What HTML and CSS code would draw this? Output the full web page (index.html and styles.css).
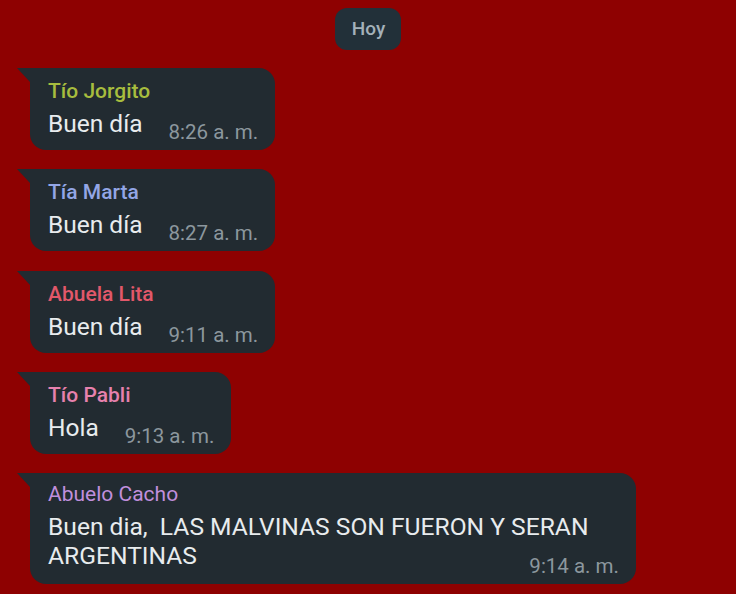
FILE: index.html
```html
<!DOCTYPE html>
<html lang="es">
<head>
<meta charset="utf-8">
<link rel="stylesheet" href="styles.css">
</head>
<body>
<div class="chat">
  <div class="day"><span class="day-pill">Hoy</span></div>
  <div class="bubble">
    <div class="name c-jorgito">Tío Jorgito</div>
    <div class="row"><span class="msg">Buen día</span><span class="time">8:26 a. m.</span></div>
  </div>
  <div class="bubble">
    <div class="name c-marta">Tía Marta</div>
    <div class="row"><span class="msg">Buen día</span><span class="time">8:27 a. m.</span></div>
  </div>
  <div class="bubble">
    <div class="name c-lita">Abuela Lita</div>
    <div class="row"><span class="msg">Buen día</span><span class="time">9:11 a. m.</span></div>
  </div>
  <div class="bubble">
    <div class="name c-pabli">Tío Pabli</div>
    <div class="row"><span class="msg">Hola</span><span class="time">9:13 a. m.</span></div>
  </div>
  <div class="bubble bubble-long">
    <div class="name name-cond c-cacho">Abuelo Cacho</div>
    <div class="msg msg-cond"><span>Buen dia,&nbsp; LAS MALVINAS SON FUERON Y SERAN</span> <span>ARGENTINAS</span><span class="time time-end">9:14 a. m.</span></div>
  </div>
</div>
</body>
</html>
```

FILE: styles.css
```css
html, body {
  margin: 0;
  padding: 0;
  background: #8e0101;
  width: 736px;
  height: 594px;
  overflow: hidden;
  font-family: Roboto, "Noto Sans", sans-serif;
}
.chat {
  display: flex;
  flex-direction: column;
  align-items: flex-start;
  padding: 8px 0 0 30px;
  gap: 19.3px;
}
.day {
  align-self: stretch;
  display: flex;
  justify-content: center;
  margin-left: -30px;
  margin-bottom: -1.3px;
}
.day-pill {
  background: #223039;
  color: #a4b1ba;
  font-weight: 500;
  font-size: 19px;
  line-height: 42px;
  padding: 0 16px 0 17px;
  border-radius: 12px;
}
.bubble {
  position: relative;
  background: #222b31;
  border-radius: 0 16px 16px 16px;
  padding: 10px 17px 0 18px;
  box-sizing: border-box;
  height: 82px;
}
.bubble::before {
  content: "";
  position: absolute;
  left: -13px;
  top: 0;
  width: 0;
  height: 0;
  border-top: 14px solid #222b31;
  border-left: 13px solid transparent;
}
.name {
  font-size: 21px;
  font-weight: 500;
  line-height: 26px;
  white-space: nowrap;
}
.c-jorgito { color: #a7bd3e; }
.c-marta { color: #93a6e6; }
.c-lita { color: #e2586a; }
.c-pabli { color: #e681ad; }
.c-cacho { color: #c08fdd; }
.row {
  display: flex;
  align-items: flex-end;
  gap: 26px;
  margin-top: 5px;
}
.msg {
  color: #e8ecee;
  font-size: 24.5px;
  line-height: 30px;
  white-space: nowrap;
}
.time {
  color: #8c979e;
  font-size: 20.5px;
  line-height: 22px;
  margin-bottom: -4px;
  white-space: nowrap;
}
.bubble-long {
  height: 111px;
  width: 606px;
  padding-top: 8px;
}
.name-cond {
  font-weight: 400;
  font-size: 21px;
}
.msg-cond {
  white-space: normal;
  margin-top: 5px;
  line-height: 29px;
  font-size: 24.6px;
}
.time-end {
  float: right;
  position: relative;
  top: 14px;
  margin-bottom: 0;
}
```
